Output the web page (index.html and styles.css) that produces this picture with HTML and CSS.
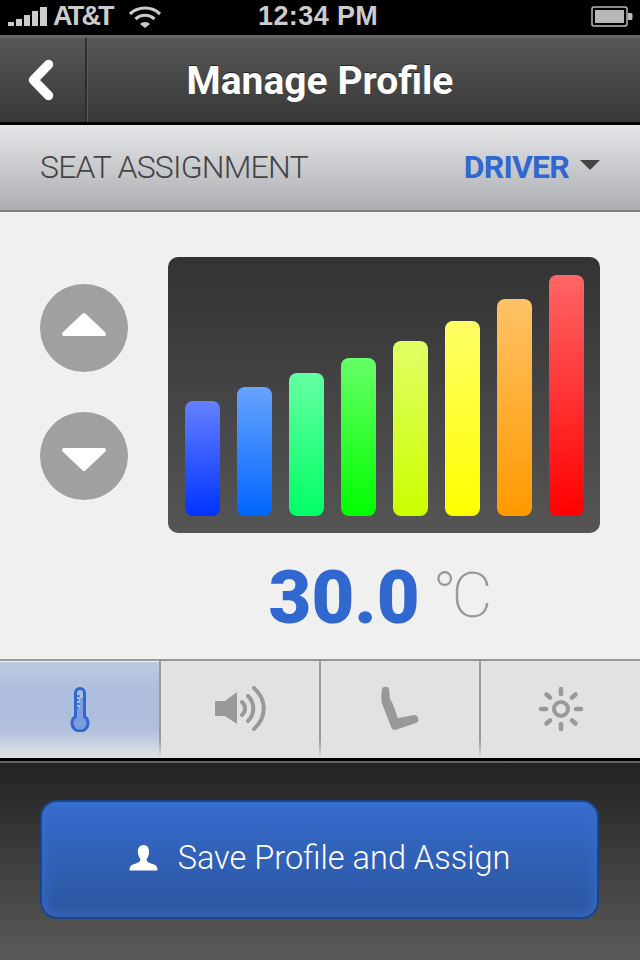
FILE: index.html
```html
<!DOCTYPE html>
<html>
  <head>
    <meta charset="utf-8">
    <title>Manage Profile</title>
    <link rel="stylesheet" href="styles.css">
  </head>
  <body>
    <!-- Status bar -->
    <div class="status-bar">
      <div class="status-left">
        <svg class="signal" width="42" height="20" viewBox="0 0 42 20">
          <rect x="0" y="15" width="6" height="4" fill="#ccc"/>
          <rect x="8" y="12" width="6" height="7" fill="#ccc"/>
          <rect x="16" y="8" width="6" height="11" fill="#ccc"/>
          <rect x="24" y="4" width="6" height="15" fill="#ccc"/>
          <rect x="32" y="0" width="7" height="19" fill="#ccc"/>
        </svg>
        <span class="carrier">AT&amp;T</span>
        <svg class="wifi" width="34" height="22" viewBox="0 0 34 22">
          <path d="M2 8 C10 0 24 0 32 8" fill="none" stroke="#ccc" stroke-width="3.2"/>
          <path d="M7.500 13 C13 8 21 8 26.500 13" fill="none" stroke="#ccc" stroke-width="3.2"/>
          <path d="M12 18 C14.500 15.200 19.500 15.200 22 18 L17 22 Z" fill="#ccc"/>
        </svg>
      </div>
      <span class="clock">12:34 PM</span>
      <svg class="battery" width="42" height="21" viewBox="0 0 42 21">
        <rect x="1" y="1" width="35" height="19" rx="2" fill="none" stroke="#bbb" stroke-width="1.500"/>
        <rect x="4" y="4" width="29" height="13" fill="#b8b8b8"/>
        <path d="M37 7 h3 a1.500 1.500 0 0 1 1.500 1.500 v4 a1.500 1.500 0 0 1 -1.500 1.500 h-3 z" fill="#bbb"/>
      </svg>
    </div>

    <!-- Nav -->
    <div class="nav">
      <div class="nav-back">
        <svg width="28" height="42" viewBox="0 0 28 42">
          <path d="M21.500 5.500 L6.500 21 L21.500 36.500" fill="none" stroke="#fff" stroke-width="9.500" stroke-linecap="round" stroke-linejoin="round"/>
        </svg>
      </div>
      <div class="nav-title">Manage Profile</div>
    </div>

    <!-- Seat -->
    <div class="seat-row">
      <span class="seat-label">SEAT ASSIGNMENT</span>
      <span class="seat-value">DRIVER<span class="caret"></span></span>
    </div>

    <!-- Main -->
    <div class="main">
      <div class="control">
        <div class="arrows">
          <div class="round-btn">
            <svg class="arrow-up" width="46" height="26" viewBox="0 0 46 26">
              <path d="M3 23 L23 4 L43 23 Z" fill="#fff" stroke="#fff" stroke-width="4" stroke-linejoin="round"/>
            </svg>
          </div>
          <div class="round-btn">
            <svg class="arrow-down" width="46" height="26" viewBox="0 0 46 26">
              <path d="M3 3 L23 22 L43 3 Z" fill="#fff" stroke="#fff" stroke-width="4" stroke-linejoin="round"/>
            </svg>
          </div>
        </div>
        <div class="chart">
          <div class="bar bar-1" style="height: 115px"></div>
          <div class="bar bar-2" style="height: 129px"></div>
          <div class="bar bar-3" style="height: 143px"></div>
          <div class="bar bar-4" style="height: 158px"></div>
          <div class="bar bar-5" style="height: 175px"></div>
          <div class="bar bar-6" style="height: 195px"></div>
          <div class="bar bar-7" style="height: 217px"></div>
          <div class="bar bar-8" style="height: 241px"></div>
        </div>
      </div>
      <div class="reading">
        <span class="reading-value">30.0</span>
        <span class="reading-unit">°C</span>
      </div>
    </div>

    <!-- Tabs -->
    <div class="tabs">
      <div class="tab tab-selected">
        <svg width="20" height="46" viewBox="0 0 20 46">
          <path d="M10 23 V12 H14 V32 A7 7 0 1 1 6 32 V23 Z" fill="#7d9ddd"/>
          <path d="M5.500 30.500 V7 A4.500 4.500 0 0 1 14.500 7 V30.500 A8 8 0 1 1 5.500 30.500 Z" fill="none" stroke="#3068cf" stroke-width="3"/>
          <path d="M6 10 h4 M6 14 h3 M6 18 h4 M6 22 h3" stroke="#3068cf" stroke-width="1.500"/>
        </svg>
      </div>
      <div class="tab">
        <svg width="54" height="46" viewBox="-1 0 54 46">
          <path d="M1 15 H11 L23 6 V38 L11 30 H1 Z" fill="#999"/>
          <g fill="none" stroke="#999" stroke-width="4" stroke-linecap="round">
            <path d="M28 16 C32 20 32 25 28 29"/>
            <path d="M34 10 C41 17 41 28 34 35"/>
            <path d="M40 2 C53 14 53 31 40 43"/>
          </g>
        </svg>
      </div>
      <div class="tab">
        <svg width="40" height="46" viewBox="0 0 40 46">
          <path d="M2 3 C2 0 9 0 9 3 L10 13 C13 17 15 24 18 32 L34 29 C39 29 40 36 36 37 L15 44 C13 44 12 43 11 41 L3 20 C1 16 1 10 2 3 Z" fill="#999"/>
        </svg>
      </div>
      <div class="tab">
        <svg width="46" height="46" viewBox="0 0 46 46">
          <circle cx="23" cy="23" r="7" fill="none" stroke="#999" stroke-width="4"/>
          <g stroke="#999" stroke-width="4.500" stroke-linecap="round">
            <path d="M23 3 V8 M23 38 V43 M3 23 H8 M38 23 H43"/>
            <path d="M8.500 8.500 L12 11.500 M34 34.500 L37.500 37.500 M8.500 37.500 L12 34.500 M34 11.500 L37.500 8.500"/>
          </g>
        </svg>
      </div>
    </div>

    <!-- Footer -->
    <div class="footer">
      <div class="save-btn">
        <svg width="29" height="26" viewBox="0 0 29 26">
          <path d="M14.500 0 C19 0 20.500 4 20 8 C19.700 11 18.500 13 17.500 14.500 C17.500 17 21 18 25 19.500 C27.500 20.500 28.500 22 28.500 25.500 H0.500 C0.500 22 1.500 20.500 4 19.500 C8 18 11.500 17 11.500 14.500 C10.500 13 9.300 11 9 8 C8.500 4 10 0 14.500 0 Z" fill="#fff"/>
        </svg>
        <span>Save Profile and Assign</span>
      </div>
    </div>
  </body>
</html>
```

FILE: styles.css
```css
* {
  box-sizing: border-box;
  margin: 0;
  padding: 0;
}
html, body {
  overflow: hidden;
}
body {
  display: flex;
  flex-direction: column;
  width: 640px;
  height: 960px;
  font-family: Roboto, sans-serif;
  background-color: #f0f0f0;
}

.status-bar {
  display: flex;
  align-items: center;
  justify-content: space-between;
  position: relative;
  height: 35px;
  padding: 0 7px 2px 8px;
  background-color: black;
  color: #ccc;
  font-family: 'Liberation Sans', sans-serif;
  font-weight: bold;
  font-size: 27px;
}
.status-left {
  display: flex;
  align-items: center;
}
.signal {
  margin-right: 3px;
}
.wifi {
  margin-left: 16px;
}
.carrier {
  letter-spacing: -2.8px;
}
.clock {
  position: absolute;
  left: 258px;
  top: 1px;
  letter-spacing: 0.4px;
}

.nav {
  display: flex;
  height: 87px;
  border-top: 3px solid #666;
  background: linear-gradient(#565656, #383838);
}
.nav-back {
  display: flex;
  align-items: center;
  justify-content: center;
  width: 87px;
  padding-right: 3px;
  border-right: 2px solid #2e2e2e;
  box-shadow: 1px 0 0 #5a5a5a;
}
.nav-title {
  flex-grow: 1;
  padding: 20px 87px 0 0;
  text-align: center;
  font-weight: bold;
  font-size: 39px;
  color: white;
  text-shadow: 0 -1px 0 #222;
}

.seat-row {
  display: flex;
  align-items: center;
  justify-content: space-between;
  height: 90px;
  padding: 0 40px 2px;
  border-top: 3px solid black;
  border-bottom: 2px solid #808080;
  background: linear-gradient(#e5e6e8, #adaeb2);
  font-size: 32px;
}
.seat-label {
  font-weight: 300;
  letter-spacing: -0.8px;
  color: #444;
}
.seat-value {
  display: flex;
  align-items: center;
  font-weight: bold;
  letter-spacing: -0.8px;
  color: #3068cf;
}
.caret {
  width: 0;
  height: 0;
  margin: 0 0 4px 11px;
  border-left: 10px solid transparent;
  border-right: 10px solid transparent;
  border-top: 10px solid #444;
}

.main {
  display: flex;
  flex-direction: column;
  height: 447px;
  padding: 45px 40px 0;
}
.control {
  display: flex;
  justify-content: space-between;
}
.arrows {
  display: flex;
  flex-direction: column;
  gap: 40px;
  padding-top: 27px;
}
.round-btn {
  display: flex;
  align-items: center;
  justify-content: center;
  width: 88px;
  height: 88px;
  border-radius: 50%;
  background-color: #a0a0a0;
}
.arrow-up {
  margin-bottom: 8px;
}
.arrow-down {
  margin-top: 8px;
}
.chart {
  display: flex;
  align-items: flex-end;
  gap: 17px;
  width: 432px;
  height: 276px;
  padding: 0 16px 17px 17px;
  border-radius: 10px;
  background: linear-gradient(#333, #555);
}
.bar {
  width: 35px;
  border-radius: 8px;
}
.bar-1 { background: linear-gradient(#6680ff, #0033ff); }
.bar-2 { background: linear-gradient(#66a3ff, #0066ff); }
.bar-3 { background: linear-gradient(#66ffa3, #00ff66); }
.bar-4 { background: linear-gradient(#66ff66, #00ff00); }
.bar-5 { background: linear-gradient(#e0ff66, #ccff00); }
.bar-6 { background: linear-gradient(#ffff66, #ffff00); }
.bar-7 { background: linear-gradient(#ffc266, #ff9900); }
.bar-8 { background: linear-gradient(#ff6666, #ff0000); }

.reading {
  display: flex;
  align-items: flex-start;
  justify-content: center;
  gap: 13px;
  margin-top: 22px;
  padding-left: 116px;
}
.reading-value {
  font-weight: 900;
  font-size: 74px;
  line-height: 86px;
  color: #3068cf;
}
.reading-unit {
  font-weight: 200;
  font-size: 63px;
  line-height: 81px;
  letter-spacing: -5px;
  color: #999;
}

.tabs {
  display: flex;
  height: 102px;
  border-top: 2px solid #999;
  border-bottom: 3px solid black;
}
.tab {
  display: flex;
  align-items: center;
  justify-content: center;
  width: 160px;
  padding-bottom: 2px;
  border-top: 1px solid #f2f2f2;
  background-color: #e2e2e2;
}
.tab:last-child {
  flex-grow: 1;
}
.tab + .tab {
  border-left: 2px solid #999;
  border-image: linear-gradient(#999 80%, #e2e2e2) 1;
  border-top: 0;
  border-right: 0;
  border-bottom: 0;
}
.tab-selected {
  width: 159px;
  background: linear-gradient(#bdcae1, #adbddd 30%, #b0bfdc 70%, #e3e3e3);
}

.footer {
  flex-grow: 1;
  padding: 37px 41px 0 40px;
  border-top: 2px solid #666;
  background: linear-gradient(#222, #5a5a5a);
}
.save-btn {
  display: flex;
  align-items: center;
  justify-content: center;
  gap: 20px;
  height: 119px;
  padding-bottom: 3px;
  border: 2px solid #1b4585;
  border-radius: 17px;
  background: linear-gradient(#366bce, #2b569e);
  box-shadow: inset 0 0 14px #3e71cf;
  font-weight: 300;
  font-size: 32.5px;
  color: white;
}
```
